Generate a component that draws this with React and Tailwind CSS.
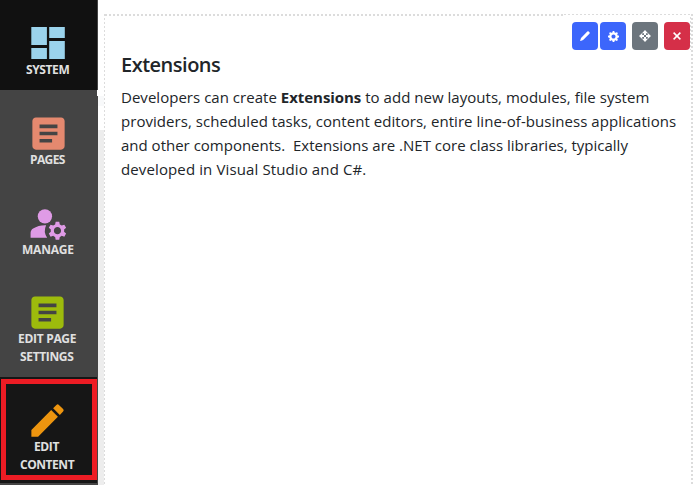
import { MdArticle, MdManageAccounts, MdEdit } from "react-icons/md";

function DashboardIcon() {
  return (
    <svg width="34" height="33" viewBox="0 0 34 33" fill="#9bd3ec">
      <rect x="0.3" y="0" width="15.6" height="18" />
      <rect x="18.2" y="0" width="15.6" height="11" />
      <rect x="0.3" y="21" width="15.6" height="11" />
      <rect x="18.2" y="14" width="15.6" height="18" />
    </svg>
  );
}

function Label({ children, className = "" }) {
  return (
    <span className={`block w-fit whitespace-nowrap text-[12px] leading-[18px] font-bold text-[#e0e0e0] ${className}`}>
      {children}
    </span>
  );
}

function Sidebar() {
  return (
    <nav className="h-[485px] w-[98px] shrink-0 bg-[#444444]">
      <div className="h-[90px] w-[97px] bg-[#111111] pt-[27px]">
        <div className="ml-[31px] h-[34px]"><DashboardIcon /></div>
        <Label className="ml-[26px] tracking-[-0.4px]">SYSTEM</Label>
      </div>
      <div className="flex h-[6px] justify-end"><div className="w-px bg-white" /></div>
      <div className="h-[94px] pt-[16px]">
        <MdArticle size={43} color="#e5896f" className="ml-[26.5px]" />
        <Label className="-mt-[4px] ml-[30px] tracking-[-0.6px]">PAGES</Label>
      </div>
      <div className="h-[187px] pt-[12px]">
        <MdManageAccounts size={43} color="#df9be6" className="ml-[26.5px]" />
        <Label className="-mt-[4px] ml-[22px] tracking-[-0.2px]">MANAGE</Label>
        <div className="h-[32px]" />
        <MdArticle size={43} color="#9dbb0c" className="ml-[25.5px]" />
        <Label className="-mt-[4px] ml-[18px] tracking-[-0.3px]">EDIT PAGE</Label>
        <Label className="ml-[20px] tracking-[-0.35px]">SETTINGS</Label>
      </div>
      <div className="h-[106px] w-[97px] bg-[#161616] pt-[2px] pl-px">
        <div className="h-[101px] w-[96px] border-[5px] border-[#ed1c24] pt-[15px]">
          <MdEdit size={43} color="#ed950f" className="ml-[19.5px]" />
          <Label className="-mt-[4px] ml-[28px] tracking-[-0.4px]">EDIT</Label>
          <Label className="ml-[14px] tracking-[-0.45px]">CONTENT</Label>
        </div>
      </div>
    </nav>
  );
}

function ToolButton({ children, className }) {
  return <button className={`flex h-7 w-[26px] items-center justify-center rounded ${className}`}>{children}</button>;
}

function Toolbar() {
  return (
    <div className="flex pt-[6px] pl-[467px]">
      <ToolButton className="bg-[#3c66fb]">
        <svg width="10" height="10" viewBox="0 0 10 10" fill="white">
          <path d="M7.3.6Q8-.1 8.7.6l.7.7q.7.7 0 1.4L3.1 9 .6 9.9Q.1 10 .2 9.4L1 6.9z" />
        </svg>
      </ToolButton>
      <ToolButton className="ml-[2px] bg-[#3c66fb]">
        <svg width="11" height="11" viewBox="0 0 8 8" fill="white">
          <path d="M3.5 0l-.5 1.19c-.1.03-.19.08-.28.13l-1.19-.5-.72.72.5 1.19c-.05.1-.09.18-.13.28l-1.19.5v1l1.19.5c.04.1.08.18.13.28l-.5 1.19.72.72 1.19-.5c.09.04.18.09.28.13l.5 1.19h1l.5-1.19c.09-.04.19-.08.28-.13l1.19.5.72-.72-.5-1.19c.04-.09.09-.19.13-.28l1.19-.5v-1l-1.19-.5c-.03-.09-.08-.19-.13-.28l.5-1.19-.72-.72-1.19.5c-.09-.04-.19-.09-.28-.13l-.5-1.19h-1zm.5 2.5c.83 0 1.5.67 1.5 1.5s-.67 1.5-1.5 1.5-1.5-.67-1.5-1.5.67-1.5 1.5-1.5z" />
        </svg>
      </ToolButton>
      <ToolButton className="ml-[6px] bg-[#6c757d]">
        <svg width="12" height="12" viewBox="0 0 12 12" fill="white">
          <path d="M6 0 9 3.2H3zM6 12 3 8.8H9zM0 6 3.2 3V9zM12 6 8.8 9V3zM5 3H7V5H5zM5 7H7V9H5zM3 5H5V7H3zM7 5H9V7H7z" />
        </svg>
      </ToolButton>
      <ToolButton className="ml-[6px] bg-[#d52f48]">
        <svg width="8" height="8" viewBox="0 0 8 8" stroke="white" strokeWidth="1.5">
          <path d="M.6.6 7.4 7.4M7.4.6.6 7.4" />
        </svg>
      </ToolButton>
    </div>
  );
}

export default function App() {
  return (
    <div className="flex h-[485px] w-[698px] overflow-hidden bg-white font-['Open_Sans','Noto_Sans',sans-serif]">
      <Sidebar />
      <div className="w-[6px] shrink-0 pt-[96px]">
        <div className="h-[10px] bg-[#f8f9fa]" />
        <div className="mt-[24px] h-[355px] bg-[#ededed]" />
      </div>
      <div className="mt-[14px] w-px shrink-0 bg-[repeating-linear-gradient(to_bottom,#dcdcdc_0px_2px,transparent_2px_4px)]" />
      <main className="mt-[14px] w-[586px] shrink-0 text-[#212529]">
        <div className="flex">
          <div className="h-[2px] w-[459px] bg-[repeating-linear-gradient(to_right,#dcdcdc_0px_2px,transparent_2px_4px)]" />
          <div className="h-px flex-1 bg-[repeating-linear-gradient(to_right,#dcdcdc_0px_2px,transparent_2px_4px)]" />
        </div>
        <div className="flex">
          <Toolbar />
          <div className="-mt-px h-[35px] flex-1 bg-[repeating-linear-gradient(to_bottom,transparent_0px_2px,#dcdcdc_2px_4px)]" />
        </div>
        <div className="pl-4 whitespace-pre">
          <h1 className="mt-[3px] w-fit text-[20px] leading-6 font-semibold tracking-[-0.5px]">Extensions</h1>
          <div className="mt-[8px] text-[15px] leading-6">
            <p className="w-fit tracking-[0.03px]">Developers can create <b className="tracking-[-0.05px]">Extensions</b> to add new layouts, modules, file system</p>
            <p className="w-fit tracking-[0.045px]">providers, scheduled tasks, content editors, entire line-of-business applications</p>
            <p className="w-fit">and other components.  Extensions are .NET core class libraries, typically</p>
            <p className="w-fit tracking-[0.12px]">developed in Visual Studio and C#.</p>
          </div>
        </div>
      </main>
      <div className="mt-[14px] w-[2px] shrink-0 bg-[repeating-linear-gradient(to_bottom,#dcdcdc_0px_2px,transparent_2px_4px)]" />
    </div>
  );
}
